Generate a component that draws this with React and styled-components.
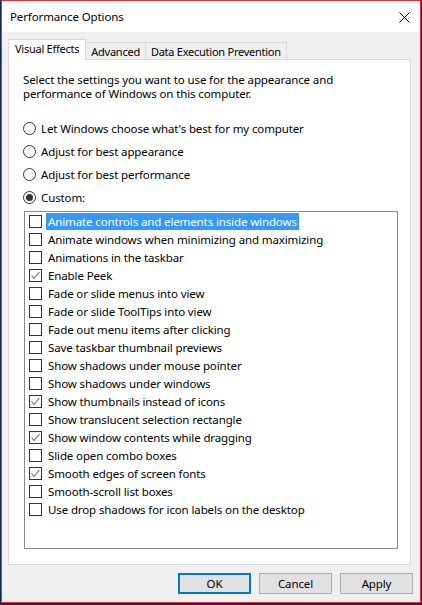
import React from "react";
import styled, { createGlobalStyle } from "styled-components";

const GlobalStyle = createGlobalStyle`
  html, body { margin: 0; padding: 0; background: #1b2a55; }
  body {
    font-family: "Noto Sans", "Open Sans", sans-serif;
    font-size: 11.5px;
    letter-spacing: -0.12px;
    color: #000;
  }
  * { box-sizing: border-box; }
`;

const Frame = styled.div`
  width: 422px;
  height: 605px;
  background: #1b2a55;
  padding: 0 1px 2px 1px;
  display: flex;
`;

const Window = styled.div`
  flex: 1;
  border: 1px solid #d6333f;
  display: flex;
  flex-direction: column;
  background: #f0f0f0;
`;

const TitleBar = styled.div`
  height: 31px;
  background: #fff;
  display: flex;
  align-items: center;
  justify-content: space-between;
  padding: 0 10px 0 8px;
`;

const Title = styled.span`
  font-size: 11.5px;
`;

const CloseBtn = styled.div`
  width: 11px;
  height: 11px;
  display: flex;
  margin-top: 1px;
`;

const Body = styled.div`
  flex: 1;
  display: flex;
  flex-direction: column;
  padding: 7px 9px 0 6px;
`;

const TabStrip = styled.div`
  display: flex;
  align-items: flex-end;
  height: 21px;
  position: relative;
  z-index: 1;
  margin-bottom: -1px;
`;

const Tab = styled.div`
  height: ${p => (p.$active ? "21px" : "18px")};
  padding: ${p => (p.$active ? "0 6px 2px 6px" : "0 5px")};
  margin-left: ${p => (p.$first ? "0" : "-1px")};
  display: flex;
  align-items: center;
  font-size: 11px;
  letter-spacing: -0.25px;
  background: ${p => (p.$active ? "#fff" : "#f0f0f0")};
  border: 1px solid #d9d9d9;
  border-bottom: ${p => (p.$active ? "1px solid #fff" : "1px solid #d9d9d9")};
  white-space: nowrap;
`;

const Panel = styled.div`
  height: 506px;
  background: #fff;
  border: 1px solid #d9d9d9;
  padding: 13px 0 0 14px;
  display: flex;
  flex-direction: column;
`;

const Description = styled.p`
  margin: 0;
  line-height: 14px;
`;

const RadioGroup = styled.div`
  display: flex;
  flex-direction: column;
  margin-top: 16px;
`;

const RadioRow = styled.label`
  height: 23px;
  display: flex;
  align-items: center;
  gap: 5px;
`;

const RadioCircle = styled.span`
  width: 13px;
  height: 13px;
  border: 1px solid #333;
  border-radius: 50%;
  display: flex;
  align-items: center;
  justify-content: center;
  background: #fff;
  &::after {
    content: "";
    width: 7px;
    height: 7px;
    border-radius: 50%;
    background: ${p => (p.$on ? "#333" : "transparent")};
  }
`;

const ListBox = styled.div`
  width: 374px;
  height: 338px;
  margin: 2px 0 0 1px;
  border: 1px solid #828790;
  padding: 0 0 0 4px;
  display: flex;
  flex-direction: column;
`;

const Item = styled.div`
  height: 18px;
  display: flex;
  align-items: center;
  gap: 4px;
`;

const CheckBox = styled.span`
  width: 13px;
  height: 13px;
  border: 1px solid #333;
  background: #fff;
  display: flex;
  align-items: center;
  justify-content: center;
`;

const ItemText = styled.span`
  height: 17px;
  line-height: 17px;
  padding: 0 2px;
  background: ${p => (p.$selected ? "#3399ff" : "transparent")};
  color: ${p => (p.$selected ? "#fff" : "#000")};
  white-space: nowrap;
`;

const ButtonRow = styled.div`
  display: flex;
  justify-content: flex-end;
  gap: 8px;
  margin: 8px -2px 0 0;
`;

const Button = styled.div`
  width: 73px;
  height: 21px;
  display: flex;
  align-items: center;
  justify-content: center;
  background: #e1e1e1;
  border: ${p => (p.$default ? "2px solid #0078d7" : "1px solid #adadad")};
`;

const CloseIcon = () => (
  <svg width="11" height="11" viewBox="0 0 11 11">
    <path d="M0.5 0.5 L10.5 10.5 M10.5 0.5 L0.5 10.5" stroke="#000" strokeWidth="1" fill="none" />
  </svg>
);

const Check = () => (
  <svg width="11" height="11" viewBox="0 0 11 11">
    <path d="M1.5 5.5 L4 8.5 L9.5 2" stroke="#666" strokeWidth="1.1" fill="none" />
  </svg>
);

const radios = [
  { label: "Let Windows choose what's best for my computer", on: false },
  { label: "Adjust for best appearance", on: false },
  { label: "Adjust for best performance", on: false },
  { label: "Custom:", on: true },
];

const effects = [
  { label: "Animate controls and elements inside windows", checked: false, selected: true },
  { label: "Animate windows when minimizing and maximizing", checked: false },
  { label: "Animations in the taskbar", checked: false },
  { label: "Enable Peek", checked: true },
  { label: "Fade or slide menus into view", checked: false },
  { label: "Fade or slide ToolTips into view", checked: false },
  { label: "Fade out menu items after clicking", checked: false },
  { label: "Save taskbar thumbnail previews", checked: false },
  { label: "Show shadows under mouse pointer", checked: false },
  { label: "Show shadows under windows", checked: false },
  { label: "Show thumbnails instead of icons", checked: true },
  { label: "Show translucent selection rectangle", checked: false },
  { label: "Show window contents while dragging", checked: true },
  { label: "Slide open combo boxes", checked: false },
  { label: "Smooth edges of screen fonts", checked: true },
  { label: "Smooth-scroll list boxes", checked: false },
  { label: "Use drop shadows for icon labels on the desktop", checked: false },
];

export default function App() {
  return (
    <>
      <GlobalStyle />
      <Frame>
        <Window>
          <TitleBar>
            <Title>Performance Options</Title>
            <CloseBtn><CloseIcon /></CloseBtn>
          </TitleBar>
          <Body>
            <TabStrip>
              <Tab $active $first>Visual Effects</Tab>
              <Tab>Advanced</Tab>
              <Tab>Data Execution Prevention</Tab>
            </TabStrip>
            <Panel>
              <Description>
                Select the settings you want to use for the appearance and<br />
                performance of Windows on this computer.
              </Description>
              <RadioGroup>
                {radios.map((r, i) => (
                  <RadioRow key={i}>
                    <RadioCircle $on={r.on} />
                    {r.label}
                  </RadioRow>
                ))}
              </RadioGroup>
              <ListBox>
                {effects.map((e, i) => (
                  <Item key={i}>
                    <CheckBox>{e.checked && <Check />}</CheckBox>
                    <ItemText $selected={e.selected}>{e.label}</ItemText>
                  </Item>
                ))}
              </ListBox>
            </Panel>
            <ButtonRow>
              <Button $default>OK</Button>
              <Button>Cancel</Button>
              <Button>Apply</Button>
            </ButtonRow>
          </Body>
        </Window>
      </Frame>
    </>
  );
}
